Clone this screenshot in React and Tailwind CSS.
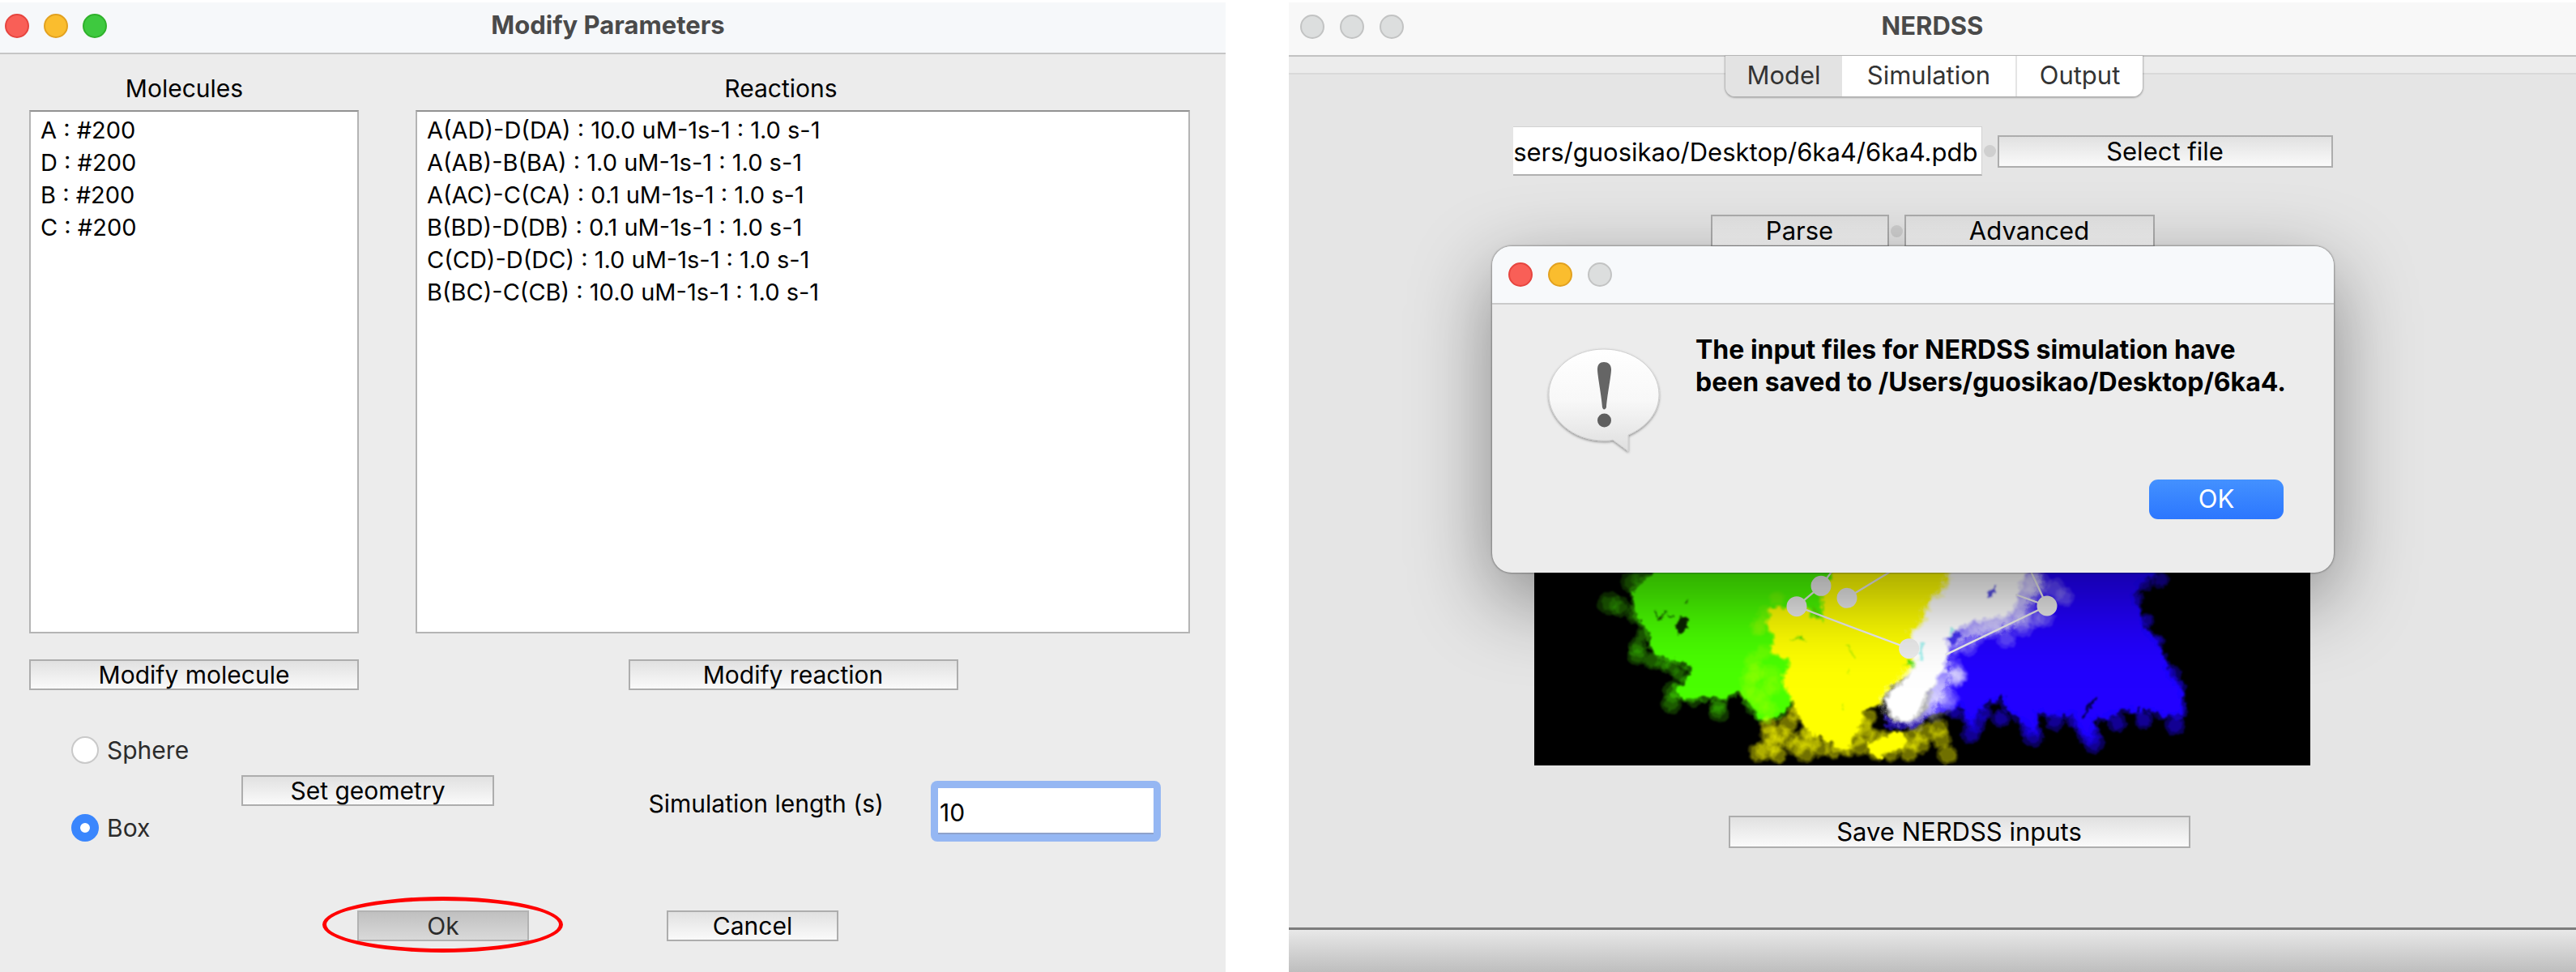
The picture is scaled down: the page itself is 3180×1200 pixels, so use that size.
import React, { useState } from "react";

const molecules = ["A : #200", "D : #200", "B : #200", "C : #200"];
const reactions = [
  "A(AD)-D(DA) : 10.0 uM-1s-1 : 1.0 s-1",
  "A(AB)-B(BA) : 1.0 uM-1s-1 : 1.0 s-1",
  "A(AC)-C(CA) : 0.1 uM-1s-1 : 1.0 s-1",
  "B(BD)-D(DB) : 0.1 uM-1s-1 : 1.0 s-1",
  "C(CD)-D(DC) : 1.0 uM-1s-1 : 1.0 s-1",
  "B(BC)-C(CB) : 10.0 uM-1s-1 : 1.0 s-1",
];

const lightColors = {
  red: "border-[#e6453f] bg-[#f95f57]",
  yellow: "border-[#e2a11f] bg-[#fabd2e]",
  green: "border-[#2fb12b] bg-[#3ec93f]",
  gray: "border-[#c2c3c3] bg-[#dcdede]",
};

function Lights({ colors, className }) {
  return (
    <div className={`flex items-center ${className}`}>
      {colors.map((c, i) => (
        <button
          key={i}
          type="button"
          aria-label={["Close", "Minimize", "Zoom"][i]}
          className={`size-[30px] rounded-full border-2 ${lightColors[c]}`}
        />
      ))}
    </div>
  );
}

function PushButton({ children, className = "", pressed = false }) {
  const look = pressed
    ? "border-[#b2b2b2] from-[#c0c0c0] to-[#d9d9d9] text-[#2b2b2b]"
    : "border-[#adadad] from-[#e1e1e1] to-[#fafafa] text-black";
  return (
    <button
      type="button"
      className={`flex items-center justify-center border-2 bg-linear-to-b leading-[34px] ${look} ${className}`}
    >
      {children}
    </button>
  );
}

function ListBox({ label, items }) {
  return (
    <ul
      aria-label={label}
      className="flex-1 border-2 border-[#b4b4b4] border-t-[#929292] bg-white px-3 pt-[3px] text-[29px] leading-10"
    >
      {items.map((t) => (
        <li key={t}>{t}</li>
      ))}
    </ul>
  );
}

function Radio({ label, value, current, onChange }) {
  return (
    <label className="flex items-center gap-[10px] text-[#2b2b2b]">
      <input
        type="radio"
        name="geometry"
        checked={value === current}
        onChange={() => onChange(value)}
        className="size-[34px] appearance-none rounded-full border-2 border-[#c9c9c9] bg-white checked:border-[11px] checked:border-[#3a86fd]"
      />
      <span className="leading-[34px]">{label}</span>
    </label>
  );
}

function ParametersWindow() {
  const [geometry, setGeometry] = useState("box");
  return (
    <section className="flex flex-col bg-[#ececec] text-[30px]">
      <header className="relative flex h-[64px] items-center justify-center border-b-2 border-[#c6c6c6] bg-[#f6f8fa]">
        <Lights colors={["red", "yellow", "green"]} className="absolute top-[14px] left-[6px] gap-[18px]" />
        <h1 className="pr-3 pb-[6px] text-[31px] leading-10 font-bold text-[#4a4a4a]">Modify Parameters</h1>
      </header>

      <div className="grid flex-1 grid-cols-[407fr_956fr] gap-[70px] pt-[22px] pr-[44px] pl-[36px]">
        <div className="flex flex-col">
          <h2 className="mb-[7px] pr-6 text-center leading-10">Molecules</h2>
          <ListBox label="Molecules" items={molecules} />
          <PushButton className="mt-8 h-[38px]">Modify molecule</PushButton>
        </div>
        <div className="flex flex-col">
          <h2 className="mb-[7px] pr-[54px] text-center leading-10">Reactions</h2>
          <ListBox label="Reactions" items={reactions} />
          <div className="mt-8 flex justify-center pr-6">
            <PushButton className="h-[38px] w-[407px]">Modify reaction</PushButton>
          </div>
        </div>
      </div>

      <div className="mt-[57px] flex items-center pr-[80px] pl-[88px]">
        <div role="radiogroup" aria-label="Geometry" className="flex h-[130px] w-[210px] flex-col justify-between">
          <Radio label="Sphere" value="sphere" current={geometry} onChange={setGeometry} />
          <Radio label="Box" value="box" current={geometry} onChange={setGeometry} />
        </div>
        <div className="pt-1">
          <PushButton className="h-[38px] w-[312px]">Set geometry</PushButton>
        </div>
        <div className="ml-auto flex items-center gap-[58px] self-end">
          <label htmlFor="length" className="pb-[20px] leading-10">
            Simulation length (s)
          </label>
          <div className="h-[75px] w-[284px] rounded-lg bg-[#95b7f3] p-[9px]">
            <input
              id="length"
              defaultValue="10"
              className="size-full border-b-2 border-[#8ea2cb] bg-white px-[2px] pt-[5px] outline-none"
            />
          </div>
        </div>
      </div>

      <div className="mt-[85px] mb-[38px] flex gap-[170px] pl-[441px]">
        <div className="relative">
          <PushButton pressed className="h-[38px] w-[212px]">Ok</PushButton>
          <div className="pointer-events-none absolute -top-[17px] -left-[43px] h-[69px] w-[297px] rounded-[50%] border-[5px] border-[#ff0000]" />
        </div>
        <PushButton className="h-[38px] w-[212px]">Cancel</PushButton>
      </div>
    </section>
  );
}

function Dot() {
  return <span className="mx-[2px] size-[15px] rounded-full bg-[#cfcfcf]" />;
}

const greenHalo = [
  [190, 60, 40], [110, 138, 44], [150, 150, 38], [230, 45, 40], [205, 180, 34], [215, 300, 36], [212, 330, 38], [235, 250, 30],
  [270, 350, 36], [310, 360, 30], [340, 370, 34], [340, 510, 38], [370, 400, 30], [345, 465, 38], [420, 490, 32], [515, 540, 38],
  [515, 515, 34], [640, 520, 30], [680, 550, 34],
];
const yellowHalo = [
  [770, 585, 38], [705, 625, 38], [690, 680, 42], [735, 700, 34], [775, 640, 38], [835, 690, 40], [830, 640, 38], [890, 670, 38],
  [940, 680, 34], [1070, 560, 34], [1060, 620, 38], [1020, 640, 34], [1100, 680, 42], [1180, 650, 44], [1220, 690, 38], [1280, 620, 40],
  [1330, 600, 38], [1340, 640, 38], [1362, 698, 38], [1260, 660, 38], [800, 550, 34], [990, 680, 30], [660, 690, 36], [720, 660, 40],
  [740, 620, 36], [800, 670, 36], [860, 650, 36], [1140, 650, 44], [1050, 590, 36], [1100, 640, 40], [1230, 640, 40], [700, 590, 34],
  [850, 610, 34], [1150, 690, 36], [1040, 670, 34],
];
const blueHalo = [
  [1450, 620, 38], [1470, 580, 38], [1440, 560, 30], [1560, 565, 34], [1680, 630, 40], [1660, 600, 36], [1760, 575, 36], [1885, 620, 44],
  [1905, 655, 40], [1870, 590, 40], [1990, 580, 36], [2090, 570, 34], [2205, 590, 38], [2215, 530, 38], [2190, 400, 36], [2150, 50, 34],
  [2090, 60, 34], [2060, 120, 30], [2100, 200, 28], [2140, 280, 28], [2210, 450, 36], [1390, 540, 30], [1500, 545, 30], [1830, 570, 30],
];
const whiteHalo = [
  [1640, 70, 44], [1700, 60, 44], [1760, 85, 42], [1795, 115, 36], [1690, 110, 44], [1640, 150, 44], [1640, 220, 44], [1680, 190, 42],
  [1720, 190, 40], [1580, 270, 36], [1520, 230, 42], [1460, 260, 42], [1400, 280, 40], [1440, 300, 34], [1560, 200, 40], [1400, 405, 40],
  [1390, 420, 34], [1400, 400, 24], [1340, 440, 40], [1370, 490, 38], [1320, 500, 38], [1290, 530, 38], [1240, 580, 34], [1380, 370, 36],
  [1650, 60, 50], [1620, 120, 50], [1600, 190, 44], [1540, 210, 44], [1480, 220, 44], [1640, 200, 36], [1330, 470, 44], [1300, 490, 44],
  [1380, 300, 40], [1400, 408, 34], [1400, 404, 30], [1350, 510, 40], [1310, 540, 36], [1680, 70, 44],
];
const mixHalo = [
  [640, 350, 34], [660, 390, 36], [630, 430, 38], [690, 460, 34], [710, 400, 36], [650, 480, 34], [700, 530, 36], [670, 220, 34], [730, 120, 30],
  [680, 320, 30], [640, 400, 40], [720, 440, 36], [670, 510, 36], [620, 470, 30], [690, 180, 34], [660, 230, 30],
];

function Blobs({ points, color, opacity }) {
  return (
    <g fill={color} fillOpacity={opacity}>
      {points.map(([x, y, r], i) => (
        <g key={i}>
          <circle cx={x} cy={y} r={r} />
          <circle cx={x} cy={y} r={r * 0.66} />
        </g>
      ))}
    </g>
  );
}

function MoleculeView() {
  return (
    <svg viewBox="-168 -1020 2874 1758" className="block w-[958px] bg-black" role="img" aria-label="Protein complex 6ka4">
      <defs>
        <filter id="rough" x="-5%" y="-5%" width="110%" height="110%">
          <feTurbulence type="fractalNoise" baseFrequency="0.04" numOctaves="3" seed="4" result="n" />
          <feDisplacementMap in="SourceGraphic" in2="n" scale="36" xChannelSelector="R" yChannelSelector="G" />
          <feGaussianBlur stdDeviation="3" />
        </filter>
        <filter id="fine" x="-5%" y="-5%" width="110%" height="110%">
          <feTurbulence type="fractalNoise" baseFrequency="0.05" numOctaves="2" seed="9" result="n" />
          <feDisplacementMap in="SourceGraphic" in2="n" scale="20" xChannelSelector="R" yChannelSelector="G" />
          <feGaussianBlur stdDeviation="3" />
        </filter>
        <filter id="glow" x="-5%" y="-5%" width="110%" height="110%">
          <feTurbulence type="fractalNoise" baseFrequency="0.04" numOctaves="3" seed="6" result="n" />
          <feGaussianBlur in="SourceGraphic" stdDeviation="9" result="b" />
          <feDisplacementMap in="b" in2="n" scale="50" xChannelSelector="R" yChannelSelector="G" />
        </filter>
      </defs>

      <g filter="url(#fine)">
        <Blobs points={greenHalo} color="#49ff00" opacity="0.2" />
        <Blobs points={blueHalo} color="#2000ff" opacity="0.35" />
      </g>
      <g filter="url(#rough)">
        <path
          fill="#49ff00"
          stroke="#49ff00"
          strokeOpacity="0.35"
          strokeWidth="24"
          d="M290-40 270 30 215 70 195 100 200 140 220 195 255 240 262 300 300 335 360 350 405 375 415 405 370 440 350 465 375 485 440 490 540 485 590 465 630 510 660 555 700 570 760 540 800 480 1000 200 1000-40Z"
        />
        <path
          fill="#2000ff"
          stroke="#2000ff"
          strokeOpacity="0.35"
          strokeWidth="24"
          d="M1560-40V60L1350 250 1290 540 1360 530 1410 515 1450 580 1480 530 1520 500 1560 495 1590 540 1640 575 1690 620 1695 540 1770 555 1830 545 1850 600 1885 640 1905 610 1900 570 1960 560 2010 530 2070 540 2110 530 2160 555 2230 550 2235 490 2215 430 2180 400 2165 330 2130 270 2090 220 2070 150 2050 110 2080 60 2140 20 2150-40Z"
        />
      </g>
      <g filter="url(#rough)">
        <path fill="#000" fillOpacity="0.85" d="M365 195 380 185 405 195 400 225 375 255 350 235Z" />
        <path fill="none" stroke="#123c00" strokeWidth="5" d="M285 165 300 195 315 170 345 190M380 135 400 125" />
        <path fill="none" stroke="#000046" strokeWidth="10" d="M1865 555 1885 510 1915 495M1890 530 1900 500M1560 500 1568 480M2065 535 2072 515" />
      </g>

      <g filter="url(#fine)">
        <Blobs points={mixHalo} color="#c8ff00" opacity="0.12" />
        <Blobs points={yellowHalo} color="#ffff00" opacity="0.25" />
        <g fill="none" stroke="#ffff00" strokeOpacity="0.35" strokeWidth="4">
          {yellowHalo.map(([x, y, r], i) => (
            <circle key={i} cx={x} cy={y} r={r * 0.7} />
          ))}
        </g>
        <Blobs points={whiteHalo} color="#ffffff" opacity="0.14" />
      </g>
      <g filter="url(#rough)">
        <path
          fill="#ffff00"
          stroke="#ffff00"
          strokeOpacity="0.4"
          strokeWidth="18"
          d="M950-40 935 50 895 90 900 150 905 200 870 195 845 165 760 155 710 160 695 215 720 250 712 320 780 345 785 370 750 410 775 460 790 500 810 560 860 620 910 640 960 680 995 690 1010 640 1040 590 1050 530 1110 510 1150 450 1200 410 1240 390 1320 250 1340 150 1400 60 1400-40Z"
        />
        <path
          fill="#ffff00"
          stroke="#ffff00"
          strokeWidth="16"
          d="M1075 665 1120 640 1180 620 1205 640 1190 670 1130 680 1105 705 1085 695Z"
        />
        <path fill="#5ae000" d="M1205 345H1250L1245 375 1205 370ZM860 140 880 165 895 195 875 190ZM800 265 820 250 825 270Z" />
        <path fill="none" stroke="#8fe600" strokeWidth="5" d="M990 290 1010 310 1018 345M1000 375 995 400M970 525 980 512M780 270 840 272" />
        <path fill="#3014ff" fillOpacity="0.6" d="M1125 545 1170 570 1240 570 1290 520 1320 500 1350 530 1290 560 1230 605 1135 600Z" />
      </g>
      <path
        filter="url(#glow)"
        fill="#ffffff"
        fillOpacity="0.5"
        d="M1365-40 1360 60 1315 110 1280 140 1270 200 1225 250 1215 300 1235 350 1215 380 1180 420 1125 470 1125 540 1170 585 1260 580 1310 540 1340 480 1370 430 1380 400 1365 370 1360 320 1390 280 1480 260 1560 240 1640 200 1660 150 1700 90 1710-40Z"
      />
      <g filter="url(#rough)">
        <path
          fill="#ffffff"
          stroke="#ffffff"
          strokeOpacity="0.6"
          strokeWidth="18"
          d="M1380-40 1375 60 1340 110 1300 140 1285 200 1240 250 1225 300 1250 350 1235 390 1205 420 1155 465 1140 510 1155 550 1190 570 1235 568 1260 530 1275 480 1315 430 1345 375 1360 320 1350 265 1400 235 1450 205 1510 192 1590 178 1620 130 1620 80 1655 20 1665-40Z"
        />
        <path fill="#5a50e8" d="M1510 90 1530 85 1545 70 1540 95 1530 115 1518 112Z" />
        <path fill="#2b16ea" fillOpacity="0.8" d="M1362 262 1400 245 1420 255 1370 290Z" />
        <path fill="#96f0ee" fillOpacity="0.8" d="M1370 225 1395 240 1370 255ZM1260 285H1272L1270 350 1252 355Z" />
      </g>

      <g stroke="#ececec" strokeWidth="7" fill="#ececec">
        <path fill="none" d="M945 5 894 73 804 149 1220 305M990 118 1200-10M1355 328 1731 147 1662 0M1615 105 1731 147" />
        <circle cx="804" cy="149" r="34" />
        <circle cx="894" cy="73" r="34" />
        <circle cx="990" cy="118" r="34" />
        <circle cx="1220" cy="305" r="34" />
        <circle cx="1731" cy="147" r="34" />
      </g>
    </svg>
  );
}

function BubbleIcon() {
  return (
    <svg viewBox="0 0 146 134" className="h-[134px] w-[146px]" aria-hidden="true">
      <defs>
        <linearGradient id="bubble" x1="0" y1="0" x2="0" y2="1">
          <stop offset="0" stopColor="#ffffff" />
          <stop offset="0.5" stopColor="#f8f8f8" />
          <stop offset="1" stopColor="#dfdfdf" />
        </linearGradient>
        <filter id="soft" x="-10%" y="-10%" width="120%" height="125%">
          <feDropShadow dx="0" dy="1.5" stdDeviation="1.5" floodColor="#000" floodOpacity="0.4" />
        </filter>
      </defs>
      <path
        filter="url(#soft)"
        fill="url(#bubble)"
        stroke="#cfcfcf"
        d="M73 3C111 3 141 28 141 59 141 81 126 99 103 109V129L84 115C80 116 77 116 73 116 35 116 5 90 5 59S35 3 73 3Z"
      />
      <path fill="#656565" d="M65 28C65 22 68 19 73 19S82 22 82 28C82 36 77 60 76 75Q73 80 71 75C70 60 65 36 65 28Z" />
      <circle cx="73.5" cy="91" r="8.5" fill="#5e5e5e" />
    </svg>
  );
}

function SavedDialog() {
  return (
    <div
      role="alertdialog"
      aria-labelledby="saved"
      className="absolute top-[301px] left-[251px] w-[1039px] overflow-hidden rounded-[24px] bg-[#ececec] shadow-[0_0_2px_1px_rgba(0,0,0,0.3),0_32px_100px_rgba(0,0,0,0.42)]"
    >
      <div className="flex h-[72px] items-center border-b-2 border-[#cacaca] bg-[#f7f9fb] pl-[20px]">
        <Lights colors={["red", "yellow", "gray"]} className="gap-[19px]" />
      </div>
      <div className="flex gap-[40px] pt-[36px] pl-[65px]">
        <div className="pt-4">
          <BubbleIcon />
        </div>
        <p id="saved" className="text-[32px] leading-10 font-bold whitespace-nowrap text-black">
          The input files for NERDSS simulation have
          <br />
          been saved to /Users/guosikao/Desktop/6ka4.
        </p>
      </div>
      <div className="mt-[30px] mb-[66px] flex justify-end pr-[62px]">
        <button
          type="button"
          className="h-[49px] w-[166px] rounded-[11px] bg-linear-to-b from-[#4491ff] to-[#2c76fe] pb-[2px] text-[31px] leading-10 text-white"
        >
          OK
        </button>
      </div>
    </div>
  );
}

const tabs = [
  { name: "Model", look: "w-[144px] bg-[#e3e3e3]" },
  { name: "Simulation", look: "w-[214px] bg-white" },
  { name: "Output", look: "w-[157px] border-l-2 border-[#e4e4e4] bg-white" },
];

function NerdssWindow() {
  return (
    <section className="relative flex flex-col bg-[#e5e5e5] text-[31px]">
      <header className="relative flex h-[67px] items-center justify-center border-b-2 border-[#c2c2c2] bg-[#f8f8f8]">
        <Lights colors={["gray", "gray", "gray"]} className="absolute top-[15px] left-[14px] gap-[19px]" />
        <h1 className="pb-[7px] text-[31px] leading-10 font-bold text-[#4a4a4a]">NERDSS</h1>
      </header>
      <div className="h-[22px] border-b-2 border-[#d9d9d9] bg-[#ececec]" />

      <div className="relative -mt-[23px] flex justify-center pl-[4px]">
        <div role="tablist" className="flex h-[50px] overflow-hidden rounded-b-xl shadow-[0_1px_2px_1px_rgba(0,0,0,0.25)]">
          {tabs.map((t, i) => (
            <button
              key={t.name}
              type="button"
              role="tab"
              aria-selected={i === 0}
              className={`pb-[2px] leading-10 text-[#333333] ${t.look}`}
            >
              {t.name}
            </button>
          ))}
        </div>
      </div>

      <div className="mt-[37px] flex items-center justify-center pr-6">
        <input
          aria-label="PDB file"
          defaultValue="sers/guosikao/Desktop/6ka4/6ka4.pdb"
          className="h-[61px] w-[579px] border-t border-r border-b-2 border-[#d2d2d2] border-b-[#b0b0b0] bg-white pt-[3px] pr-[4px] text-right outline-none"
        />
        <Dot />
        <PushButton className="h-10 w-[414px]">Select file</PushButton>
      </div>

      <div className="mt-[48px] flex items-center justify-center">
        <PushButton className="h-10 w-[220px]">Parse</PushButton>
        <Dot />
        <PushButton className="h-10 w-[309px]">Advanced</PushButton>
      </div>

      <div className="mt-[54px] flex justify-center pr-[26px]">
        <MoleculeView />
      </div>

      <div className="mt-[62px] flex justify-center pl-[66px]">
        <PushButton className="h-10 w-[570px]">Save NERDSS inputs</PushButton>
      </div>

      <div className="mt-auto h-[55px] border-t-[3px] border-[#7c7c7c] bg-linear-to-b from-[#e8e8e8] to-[#bebebe]" />
      <SavedDialog />
    </section>
  );
}

export default function App() {
  return (
    <main className="grid min-h-screen grid-cols-[1513fr_1589fr] gap-[78px] bg-white pt-[3px] font-['Inter',sans-serif] text-black">
      <ParametersWindow />
      <NerdssWindow />
    </main>
  );
}
